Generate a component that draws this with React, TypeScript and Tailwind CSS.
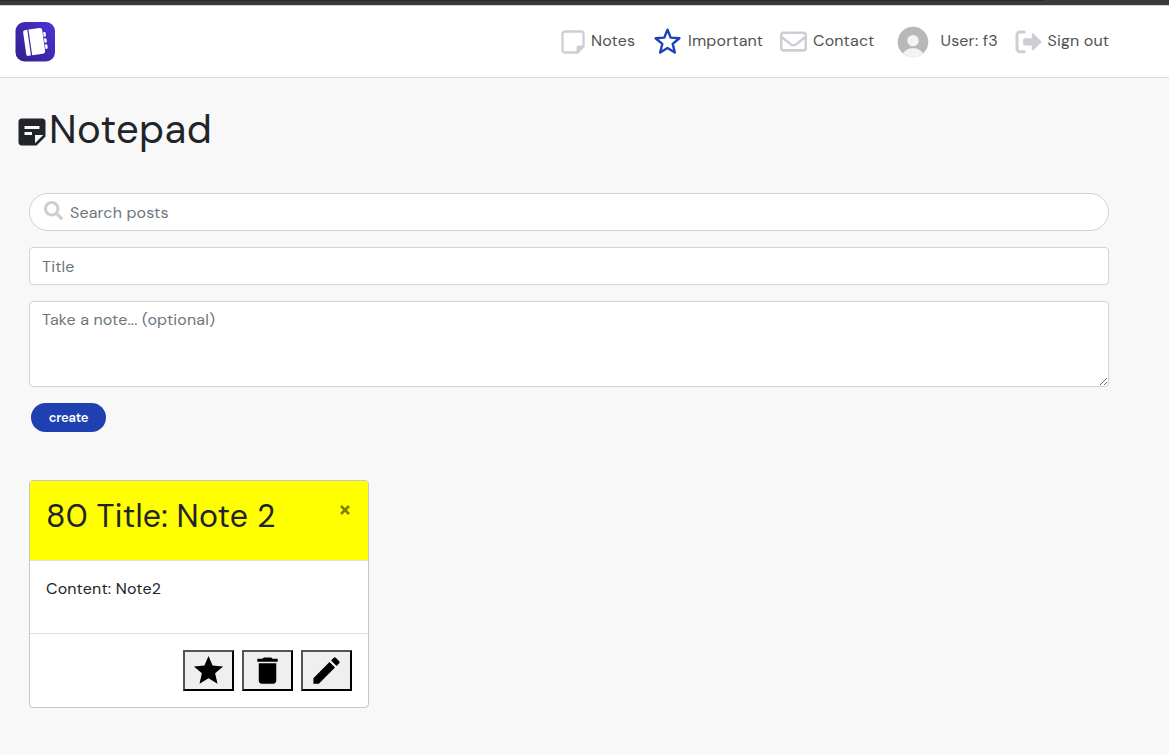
import React from "react";
import { MdStickyNote2, MdStar, MdDelete, MdEdit } from "react-icons/md";
import { FaSearch } from "react-icons/fa";
import { FaRegEnvelope } from "react-icons/fa6";

function Logo() {
  return (
    <svg width="40" height="40" viewBox="0 0 40 40">
      <defs>
        <linearGradient id="logo" x1="1" y1="0.1" x2="0.1" y2="1">
          <stop offset="0" stopColor="#4c32d4" />
          <stop offset="1" stopColor="#32208c" />
        </linearGradient>
      </defs>
      <rect x="0.5" width="39.5" height="39.5" rx="9" fill="url(#logo)" />
      <g transform="rotate(-8 20 20)" fill="#fff">
        <path d="M11.4 6.8h2.7v26h-2.7a1.8 1.8 0 0 1-1.8-1.8V8.6a1.8 1.8 0 0 1 1.8-1.8z" />
        <path d="M15.3 6.8H26.4a2.4 2.4 0 0 1 2.4 2.4v21.2a2.4 2.4 0 0 1-2.4 2.4H15.3z" />
        <path d="M29.4 11.5h1.8l.6.9v2.6l-.6.9h-1.8zM29.4 17.7h1.8l.6.9v2.6l-.6.9h-1.8zM29.4 23.9h1.8l.6.9v2.6l-.6.9h-1.8z" />
      </g>
    </svg>
  );
}

function NoteIcon() {
  return (
    <svg width="24" height="24" viewBox="0 0 24 24" fill="none">
      <path d="M4 1.5h16A2.5 2.5 0 0 1 22.5 4v12.5l-6 6H4A2.5 2.5 0 0 1 1.5 20V4A2.5 2.5 0 0 1 4 1.5z" stroke="#cecdd4" strokeWidth="2.3" />
      <path d="M15.5 22.5v-5a2 2 0 0 1 2-2h5v1.5l-5.5 5.5z" fill="#cecdd4" />
    </svg>
  );
}

function StarIcon() {
  return (
    <svg width="29" height="29" viewBox="0 0 28 28">
      <path
        d="M14 2.6l3.1 7.7 8.4.6-6.5 5.4 2.1 8.4L14 20.2l-7.1 4.5L9 16.3l-6.5-5.4 8.4-.6z"
        fill="none"
        stroke="#1e40b8"
        strokeWidth="2.3"
        strokeLinejoin="round"
      />
    </svg>
  );
}

function AvatarIcon() {
  return (
    <svg width="32" height="32" viewBox="0 0 32 32">
      <defs>
        <clipPath id="avatar"><circle cx="16" cy="16" r="15.3" /></clipPath>
      </defs>
      <g clipPath="url(#avatar)">
        <rect width="32" height="32" fill="#b8b8b8" />
        <circle cx="16" cy="14.6" r="5.7" fill="#f3f3f3" />
        <ellipse cx="16" cy="31.5" rx="11" ry="9.6" fill="#f3f3f3" />
      </g>
    </svg>
  );
}

function SignOutIcon() {
  return (
    <svg width="27" height="24" viewBox="0 0 27 24">
      <path d="M9.2 1.9H5A3 3 0 0 0 2 4.9v13.8a3 3 0 0 0 3 3h4.2" fill="none" stroke="#cecdd4" strokeWidth="3" strokeLinecap="round" />
      <path d="M9.7 8.2h7.1V4.6c0-1.3 1-1.6 1.9-.8l7.3 7.2c.6.6.6 1.1 0 1.7l-7.3 7.2c-.9.8-1.9.5-1.9-.8v-3.7H9.7a1.6 1.6 0 0 1-1.6-1.6v-4a1.6 1.6 0 0 1 1.6-1.6z" fill="#cecdd4" />
    </svg>
  );
}

const actionButton =
  "flex h-[41px] w-[51px] items-center justify-center border-2 border-t-[#545454] border-l-[#545454] border-r-black border-b-black bg-[#efefef] text-black";

export default function App() {
  return (
    <div className="min-h-[755px] w-full bg-[#f8f8f8] font-['DM_Sans',Inter,sans-serif] text-base tracking-[0.16px] text-[#212529]">
      <div className="h-[5px] bg-[#3a3a3a]">
        <div className="h-px w-[1044px] bg-[#2a2a2a]" />
      </div>
      <header className="flex h-[73px] border-t border-b border-t-[#d4d4d4] border-b-[#dcdcdc] bg-white pl-[15px]">
        <div className="flex w-[545px] pt-4">
          <Logo />
        </div>
        <nav className="flex h-[71px] items-center whitespace-nowrap text-[#525252]">
          <a className="flex w-[92px] items-center">
            <span className="flex w-[31px] pl-px"><NoteIcon /></span>
            <span className="pb-px">Notes</span>
          </a>
          <a className="flex w-32 items-center">
            <span className="flex w-[36px] pl-[0.5px]"><StarIcon /></span>
            <span className="pb-px">Important</span>
          </a>
          <a className="flex w-[117px] items-center">
            <span className="flex w-[33px]"><FaRegEnvelope className="size-[27px] text-[#cecdd4]" /></span>
            <span className="pb-px">Contact</span>
          </a>
          <a className="flex w-[118px] items-center">
            <span className="flex w-[43.5px]"><AvatarIcon /></span>
            <span className="pb-px">User: f3</span>
          </a>
          <a className="flex items-center">
            <span className="flex w-[32.5px]"><SignOutIcon /></span>
            <span className="pb-px">Sign out</span>
          </a>
        </nav>
      </header>

      <main>
        <h1 className="flex h-[115px] pt-[27px] pl-[13.5px] text-[40px] leading-12">
          <MdStickyNote2 className="mt-[9px] size-9" />
          <span className="-ml-[0.5px] tracking-[0.42px]">Notepad</span>
        </h1>

        <form className="flex w-[1109px] flex-col gap-4 pl-[29px]">
          <div className="flex h-[38px] items-center rounded-full border border-[#ced4da] bg-white pl-[14px]">
            <FaSearch className="mb-[3px] size-[19px] text-[#cecdd4]" />
            <input className="ml-[7px] h-6 w-[900px] pt-px outline-none placeholder:text-[#6c757d]" placeholder="Search posts" />
          </div>
          <input className="h-[38px] rounded border border-[#ced4da] bg-white px-3 outline-none placeholder:text-[#6c757d]" placeholder="Title" />
          <textarea className="block h-[86px] resize-y rounded border border-[#ced4da] bg-white px-3 py-1.5 outline-none placeholder:text-[#6c757d]" placeholder="Take a note... (optional)" />
          <button type="button" className="ml-[2px] h-[29px] w-[75px] rounded-full bg-[#1e40b0] text-[13px] font-semibold tracking-[-0.2px] text-white">create</button>
        </form>

        <article className="mt-12 ml-[29px] flex h-[228px] w-[340px] flex-col overflow-hidden rounded border border-[#c6c6c6] bg-white">
          <div className="flex h-20 justify-between border-b border-[#dfdfdf] bg-[#ffff00] pt-4 pr-[18px] pl-4">
            <h2 className="text-[32px] leading-[38px] tracking-[0.23px] whitespace-nowrap">80 Title: Note 2</h2>
            <svg className="mt-2" width="10" height="10" viewBox="0 0 10 10">
              <path d="M1 1l8 8M9 1L1 9" stroke="#808000" strokeWidth="2.6" />
            </svg>
          </div>
          <div className="h-[73px] border-b border-[#dfdfdf] px-4 pt-4">
            <p className="leading-6">Content: Note2</p>
          </div>
          <div className="flex justify-end gap-2 pt-4 pr-4">
            <button className={actionButton}><MdStar className="size-[35px]" /></button>
            <button className={actionButton}><MdDelete className="size-[35px]" /></button>
            <button className={actionButton}><MdEdit className="size-[35px]" /></button>
          </div>
        </article>
      </main>
    </div>
  );
}
